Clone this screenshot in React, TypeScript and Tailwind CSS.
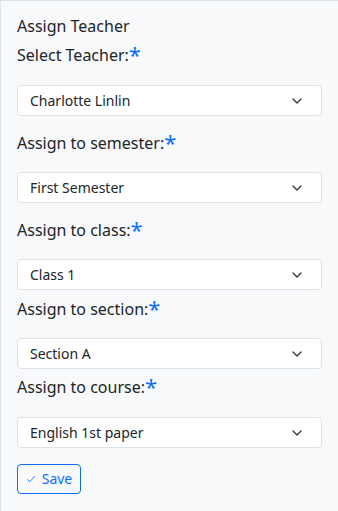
import { ChevronDown } from 'lucide-react';

const fields = [
  { label: 'Select Teacher:', value: 'Charlotte Linlin', labelMt: 'mt-[5px]', selectMt: 'mt-[18px]' },
  { label: 'Assign to semester:', value: 'First Semester', labelMt: 'mt-[15px]', selectMt: 'mt-[17px]' },
  { label: 'Assign to class:', value: 'Class 1', labelMt: 'mt-[15px]', selectMt: 'mt-[17px]' },
  { label: 'Assign to section:', value: 'Section A', labelMt: 'mt-[7px]', selectMt: 'mt-[17px]' },
  { label: 'Assign to course:', value: 'English 1st paper', labelMt: 'mt-[6px]', selectMt: 'mt-[18px]' },
];

export default function App() {
  return (
    <div
      className="min-h-[511px] w-[338px] bg-[#f8f9fa] border-t border-l border-[#dee2e6] px-4 pt-[13px] text-[#212529]"
      style={{ fontFamily: '"Noto Sans", sans-serif' }}
    >
      <h5 className="text-base leading-6">Assign Teacher</h5>
      {fields.map((f) => (
        <div key={f.label}>
          <label className={`block h-6 text-base leading-6 ${f.labelMt}`}>
            {f.label}
            <span className="relative top-[2px] text-[22px] leading-[0] text-[#0d6efd]">*</span>
          </label>
          <div
            className={`flex h-[31px] w-[305px] items-center justify-between rounded border border-[#dee2e6] bg-white pl-3 pr-4 text-sm ${f.selectMt}`}
          >
            <span>{f.value}</span>
            <ChevronDown className="h-4 w-4 text-[#343a40]" strokeWidth={2} />
          </div>
        </div>
      ))}
      <button
        type="button"
        className="mt-[16px] flex h-[30px] w-[64px] items-center justify-center gap-1.5 rounded border border-[#0d6efd] text-sm text-[#0d6efd]"
      >
        <svg viewBox="0 0 16 16" className="h-[10px] w-[10px]" fill="none" stroke="currentColor" strokeWidth="1.4">
          <path d="M2 8.5l4 4 8-9" />
        </svg>
        Save
      </button>
    </div>
  );
}
